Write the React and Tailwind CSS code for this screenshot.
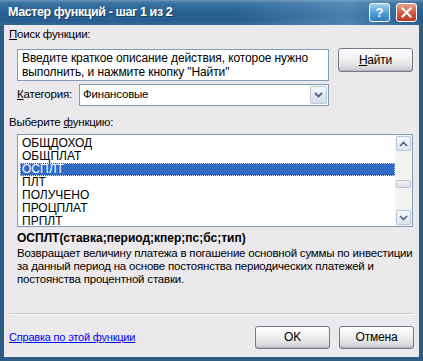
import React from "react";

const font = { fontFamily: '"Liberation Sans", Arial, sans-serif' };

function XPButton({ children, className = "" }) {
  return (
    <div
      className={
        "flex items-center justify-center h-[23px] w-[75px] rounded-[3px] border border-[#6f7b86] text-[12px] text-black bg-[linear-gradient(to_bottom,#ffffff_0%,#f4f4f4_35%,#e4e4e6_70%,#c9c9cd_100%)] shadow-[inset_0_-1px_0_#b5b5b9] " +
        className
      }
    >
      {children}
    </div>
  );
}

function ArrowBtn({ dir }) {
  return (
    <div className="w-[15px] h-[15px] rounded-[2px] border border-[#b9c6d8] bg-[linear-gradient(to_bottom,#f6f8fb,#dde3ec)] flex items-center justify-center">
      <svg width="9" height="6" viewBox="0 0 9 6">
        {dir === "up" ? (
          <path d="M1 5 L4.5 1.5 L8 5" fill="none" stroke="#4d6185" strokeWidth="1.6" />
        ) : (
          <path d="M1 1 L4.5 4.5 L8 1" fill="none" stroke="#4d6185" strokeWidth="1.6" />
        )}
      </svg>
    </div>
  );
}

export default function App() {
  const items = ["ОБЩДОХОД", "ОБЩПЛАТ", "ОСПЛТ", "ПЛТ", "ПОЛУЧЕНО", "ПРОЦПЛАТ", "ПРПЛТ"];
  return (
    <div
      className="w-[423px] h-[361px] flex flex-col bg-[#2c5c82] px-[4px] pb-[4px] overflow-hidden"
      style={font}
    >
      {/* Title bar */}
      <div className="h-[25px] -mx-[4px] flex items-center pl-[8px] pr-[6px] bg-[linear-gradient(to_bottom,#6995bb_0%,#3a72a0_12%,#276194_50%,#265f92_85%,#356a94_100%)] relative">
        <div className="absolute inset-0 bg-[linear-gradient(to_right,rgba(0,0,0,0)_0%,rgba(0,0,0,0)_55%,rgba(140,190,225,0.35)_82%,rgba(0,0,0,0.05)_100%)]" />
        <span className="relative text-white font-bold text-[12.5px] tracking-[-0.4px] [text-shadow:1px_1px_0_#1d3f5c]">
          Мастер функций - шаг 1 из 2
        </span>
        <div className="relative ml-auto flex gap-[6px] items-center">
          <div className="w-[21px] h-[19px] rounded-[3px] border border-white bg-[linear-gradient(to_bottom,#9fd0f0,#4d98d0_60%,#2f7cc0)] flex items-center justify-center text-white font-bold text-[13px] leading-none">
            ?
          </div>
          <div className="w-[21px] h-[19px] rounded-[3px] border border-white bg-[linear-gradient(to_bottom,#e9a08c,#d0583c_55%,#b8391f)] flex items-center justify-center">
            <svg width="11" height="11" viewBox="0 0 11 11">
              <path d="M1.5 1.5 L9.5 9.5 M9.5 1.5 L1.5 9.5" stroke="white" strokeWidth="2.2" strokeLinecap="square" />
            </svg>
          </div>
        </div>
      </div>

      {/* Body */}
      <div className="flex-1 bg-[#ece9ec] flex flex-col px-[5px] text-[11.5px] tracking-[-0.2px] text-black">
        <div className="mt-[2px] h-[14px] leading-[14px]">
          <span className="underline">П</span>оиск функции:
        </div>

        <div className="mt-[8px] flex items-start">
          <div className="ml-[8px] w-[312px] h-[32px] bg-white border border-[#7f9db9] px-[4px] pt-[1px] leading-[14px] text-[12px] tracking-[-0.1px]">
            Введите краткое описание действия, которое нужно выполнить, и нажмите кнопку "Найти"
          </div>
          <XPButton className="ml-[9px] -mt-[1px] h-[24px]">
            <span>
              <span className="underline">Н</span>айти
            </span>
          </XPButton>
        </div>

        <div className="mt-[3px] flex items-center ml-[8px]">
          <span className="w-[62px]">
            <span className="underline">К</span>атегория:
          </span>
          <div className="w-[250px] h-[22px] bg-white border border-[#7f9db9] flex items-center">
            <span className="pl-[3px] flex-1">Финансовые</span>
            <div className="w-[17px] h-[18px] mr-[1px] rounded-[2px] border border-[#b9c6d8] bg-[linear-gradient(to_bottom,#f6f8fb,#d5dce8)] flex items-center justify-center">
              <svg width="9" height="6" viewBox="0 0 9 6">
                <path d="M1 1 L4.5 4.5 L8 1" fill="none" stroke="#4d6185" strokeWidth="1.8" />
              </svg>
            </div>
          </div>
        </div>

        <div className="mt-[9px] h-[14px] leading-[14px]">
          Выберите <span className="underline">ф</span>ункцию:
        </div>

        <div className="mt-[5px] ml-[8px] w-[396px] h-[93px] bg-white border border-[#7f9db9] flex">
          <div className="flex-1 pl-[2px] pt-[2px] flex flex-col">
            {items.map((it) => (
              <div
                key={it}
                className={
                  "h-[13px] leading-[13px] pl-[2px] text-[12px] tracking-normal " +
                  (it === "ОСПЛТ"
                    ? "bg-[#316ac5] text-white outline outline-1 outline-dotted outline-[#c8d8f0] -outline-offset-1"
                    : "")
                }
              >
                {it}
              </div>
            ))}
          </div>
          <div className="w-[17px] bg-[#f3f3ef] flex flex-col items-center py-[1px]">
            <ArrowBtn dir="up" />
            <div className="flex-1 w-full flex flex-col items-center">
              <div className="mt-[29px] w-[15px] h-[8px] rounded-[2px] border border-[#b9c6d8] bg-[linear-gradient(to_bottom,#f3f5f9,#d8dee8)]" />
            </div>
            <ArrowBtn dir="down" />
          </div>
        </div>

        <div className="mt-[4px] ml-[8px] font-bold text-[12px] tracking-normal leading-[14px]">
          ОСПЛТ(ставка;период;кпер;пс;бс;тип)
        </div>
        <div className="mt-[2px] ml-[8px] w-[400px] leading-[13px]">
          Возвращает величину платежа в погашение основной суммы по инвестиции за данный период на основе постоянства периодических платежей и постоянства процентной ставки.
        </div>

        <div className="flex-1" />
        <div className="h-[1px] bg-[#c9c6cc] border-b border-white box-content" />
        <div className="h-[42px] flex items-center">
          <span className="text-[#0000ff] underline mt-[2px] text-[11px]">Справка по этой функции</span>
          <div className="ml-auto flex gap-[9px] mt-[2px]">
            <XPButton>OK</XPButton>
            <XPButton>Отмена</XPButton>
          </div>
        </div>
      </div>
    </div>
  );
}
